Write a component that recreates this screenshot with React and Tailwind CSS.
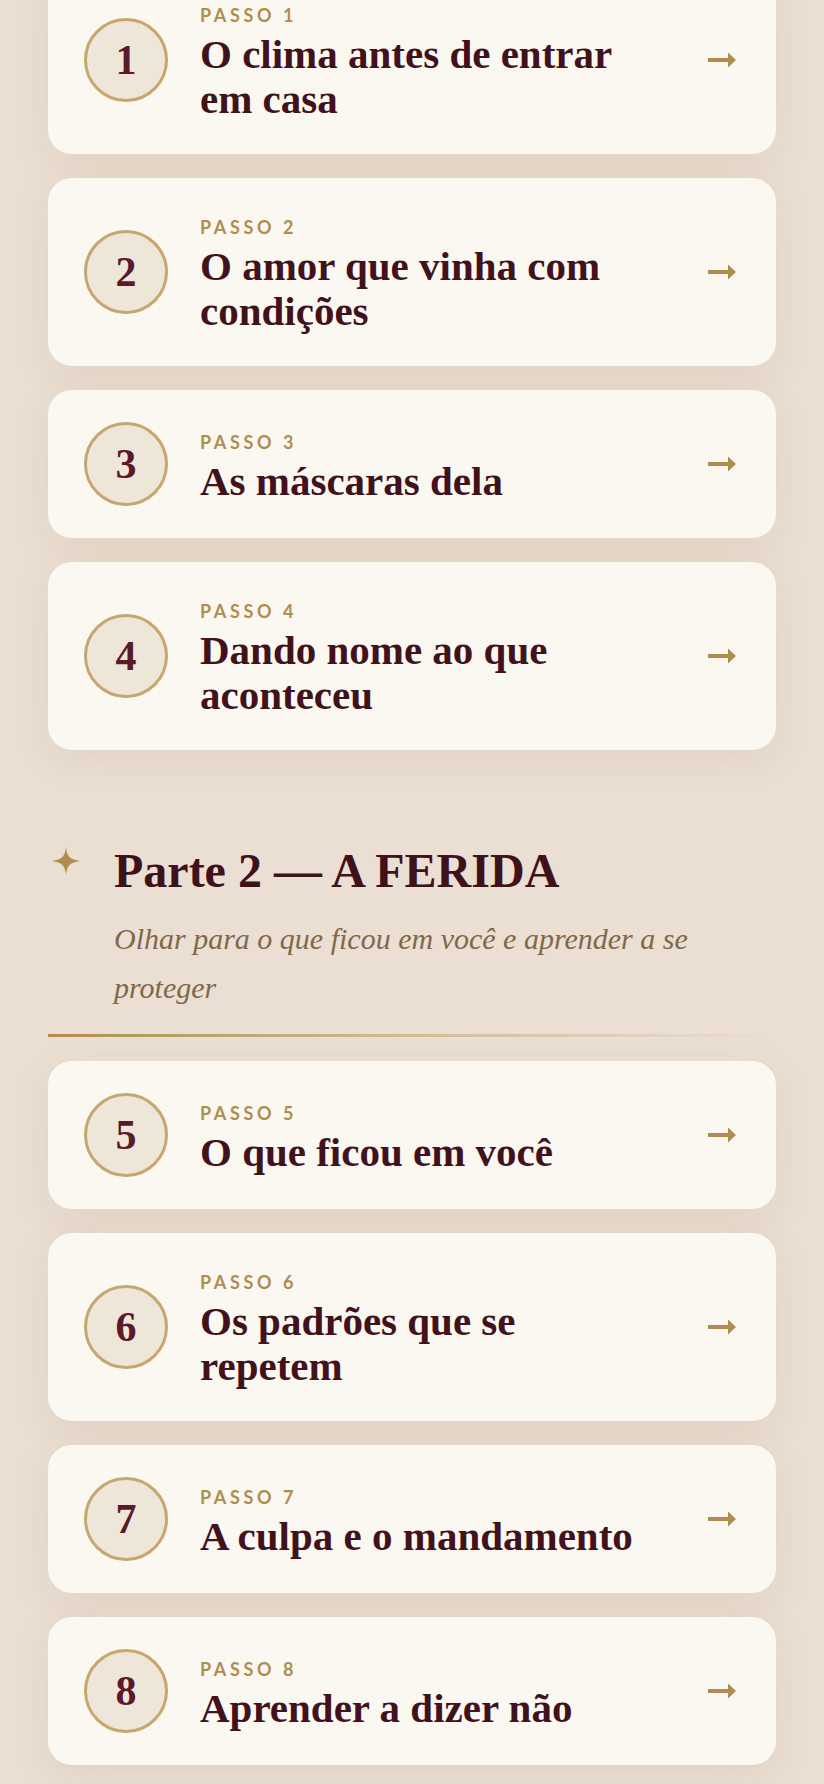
import React from 'react';

const partOne = [
  { n: 1, title: 'O clima antes de entrar em casa' },
  { n: 2, title: 'O amor que vinha com condições' },
  { n: 3, title: 'As máscaras dela' },
  { n: 4, title: 'Dando nome ao que aconteceu' },
];

const partTwo = [
  { n: 5, title: 'O que ficou em você' },
  { n: 6, title: 'Os padrões que se repetem' },
  { n: 7, title: 'A culpa e o mandamento' },
  { n: 8, title: 'Aprender a dizer não' },
];

const serif = "font-['Liberation_Serif',serif]";

function Arrow() {
  return (
    <svg width="28" height="16" viewBox="0 0 28 16" className="shrink-0 ml-10" fill="#b08d4f">
      <rect x="0" y="6" width="21" height="4" />
      <polygon points="20,0.5 28,8 20,15.5" />
    </svg>
  );
}

function Sparkle() {
  return (
    <svg width="28" height="28" viewBox="0 0 28 28" className="shrink-0 ml-[4px] mt-[5px]" fill="#b08d4f">
      <path d="M14 0 C15 9.5 18 12.5 28 14 C18 15.5 15 18.5 14 28 C13 18.5 10 15.5 0 14 C10 12.5 13 9.5 14 0 Z" />
    </svg>
  );
}

function StepCard({ n, title }) {
  return (
    <div className="flex items-center bg-[#fbf8f2] rounded-[24px] pl-9 pr-10 py-8 shadow-[0_10px_40px_rgba(120,88,45,0.09)]">
      <div className="w-[84px] h-[84px] shrink-0 rounded-full border-[3px] border-[#c9a66b] bg-[#efe6da] flex items-center justify-center">
        <span className={`${serif} text-[42px] leading-none font-bold text-[#5a1a2a]`}>{n}</span>
      </div>
      <div className="ml-8 flex-1 min-w-0">
        <div className="font-['Lato',sans-serif] font-bold text-[18px] leading-[34px] tracking-[0.2em] text-[#b08d4f]">
          PASSO {n}
        </div>
        <div className={`${serif} font-bold text-[41px] leading-[45px] text-[#42121c]`}>{title}</div>
      </div>
      <Arrow />
    </div>
  );
}

export default function App() {
  return (
    <div className="min-h-screen bg-[#eadfd2] overflow-hidden">
      <div className="px-12 -mt-[34px] pb-10 flex flex-col gap-6">
        {partOne.map((s) => (
          <StepCard key={s.n} {...s} />
        ))}

        <div className="mt-[68px]">
          <div className="flex items-start">
            <Sparkle />
            <div className="ml-[34px]">
              <h2 className={`${serif} font-bold text-[48px] leading-[58px] text-[#3f111b]`}>
                Parte 2 — A FERIDA
              </h2>
              <p className={`${serif} italic text-[30px] leading-[49px] text-[#80694a] mt-[14px]`}>
                Olhar para o que ficou em você e aprender a se proteger
              </p>
            </div>
          </div>
          <div className="h-[3px] mt-[22px] bg-gradient-to-r from-[#b08d4f] via-[#d2bb93] to-transparent" />
        </div>

        {partTwo.map((s) => (
          <StepCard key={s.n} {...s} />
        ))}
      </div>
    </div>
  );
}
